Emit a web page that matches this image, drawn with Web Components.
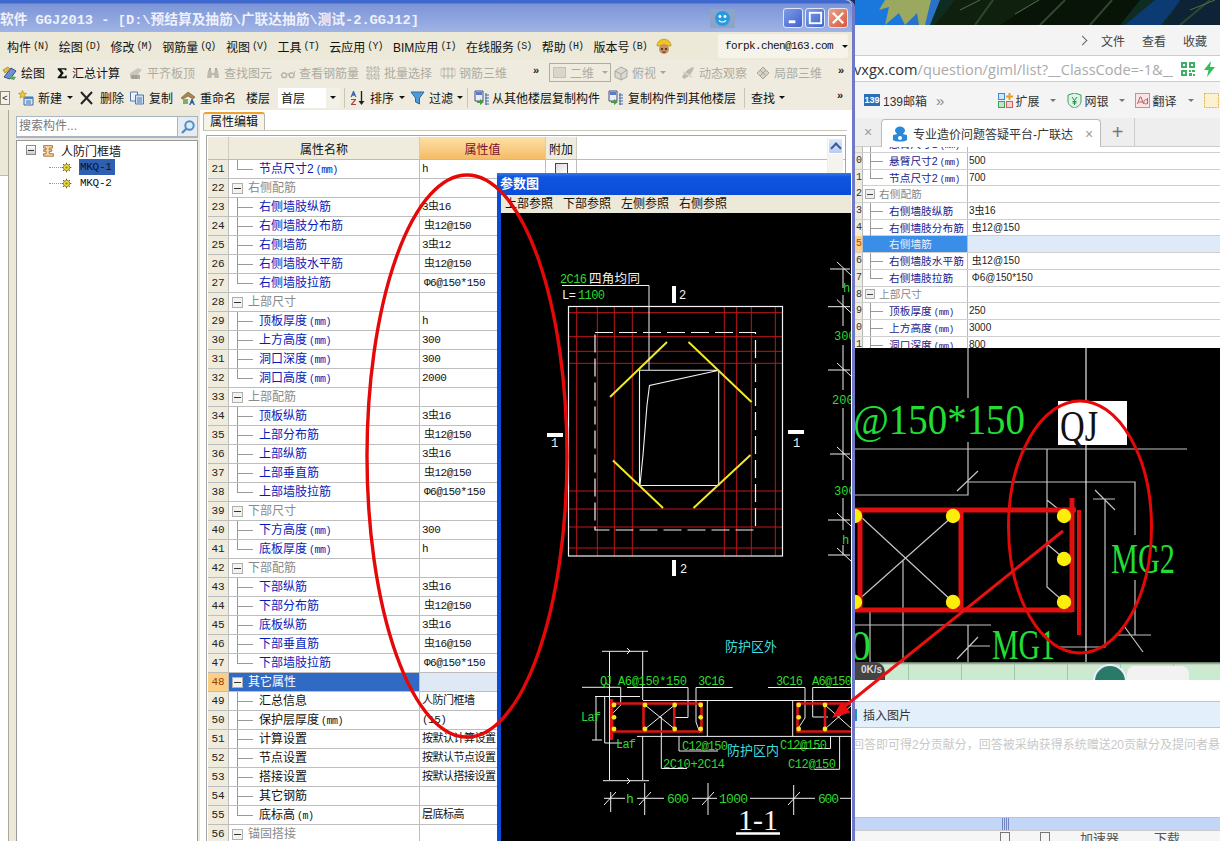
<!DOCTYPE html>
<html lang="zh">
<head>
<meta charset="utf-8">
<title>GGJ2013</title>
<style>
  html, body { margin: 0; padding: 0; background: #000; }
  body { font: 12px "Liberation Sans", "Noto Sans CJK SC", sans-serif; color: #111; }
</style>
</head>
<body>
<gl-desktop>
  <gl-wallpaper></gl-wallpaper>
  <gl-browser></gl-browser>
  <ggj-window></ggj-window>
  <param-dialog></param-dialog>
  <markup-layer></markup-layer>
</gl-desktop>

<script>
const MONO = '"Liberation Mono", "Noto Sans CJK SC", monospace';

const ICONS = {
  draw: '<path d="M2 12 L9 3 L14 6 L8 14 Z" fill="#6f8fd0" stroke="#34508c"/><path d="M1 5l5-3 2 2-5 4z" fill="#e8c040" stroke="#8a6a10" stroke-width=".6"/><path d="M9 11l5 1-2 3-4-1z" fill="#58a858"/>',
  sigma: '<path d="M3 2.5h10v2.4h-1.6l-.4-.9H7l3 4-3 4h4.4l.5-1.1H13.4V14H3v-1.2L6.7 8.2 3 3.6z" fill="#111"/>',
  level: '<path d="M2 13V8l8-5 4 2-3 3v5z" fill="#c9c7bd"/><path d="M3 10h9v4H3z" fill="#aeaca2"/><path d="M5 10v4M8 10v4" stroke="#8f8d84"/>',
  binoc: '<path d="M2 13l1-8h3l1 3h2l1-3h3l1 8H9.6L9 10H7l-.6 3z" fill="#bdbbb0"/><path d="M4 3h2v2H4zM10 3h2v2h-2z" fill="#a5a399"/>',
  glasses: '<path d="M1.5 10c1-3 4-3 5 0s-4 4-5 0zM9 10c1-3 4-3 5 0s-4 4-5 0z" fill="none" stroke="#b4b2a8" stroke-width="1.4"/><path d="M6.5 9l3-.2M14 9l1-3" stroke="#b4b2a8"/>',
  batch: '<path d="M2 2h5v5H2zM9 2h5v5H9zM2 9h5v5H2zM9 9h5v5H9z" fill="#d9d7cc" stroke="#b0aea3" stroke-dasharray="2 1"/>',
  rebar: '<path d="M1 4h14M1 11h14M4 2v12M8 2v12M12 2v12" stroke="#b4b2a8" fill="none"/><path d="M1 4v7M15 4v7" stroke="#c8c6bb"/>',
  cube: '<path d="M2 6l6-4 6 3v7l-6 3-6-3z" fill="#dcdad0" stroke="#aaa89e"/><path d="M2 6l6 3 6-4M8 9v6" stroke="#aaa89e" fill="none"/>',
  orbit: '<path d="M2 12c2-5 7-9 12-10-1 5-5 10-10 12z" fill="#bdbbb1"/><path d="M3 7l9 5" stroke="#d8d6cc" stroke-width="2"/>',
  local: '<path d="M2 8l6-6 6 6-6 6z" fill="#d4d2c7" stroke="#a8a69c"/><path d="M5 5l6 6M11 5l-6 6" stroke="#a8a69c"/>',
  news: '<path d="M6 7h9v8H6z" fill="#dfe8f6" stroke="#3c6aa8"/><path d="M6 7h9v2H6z" fill="#4e82c8"/><path d="M8 11h5M8 13h5" stroke="#3c6aa8"/><path d="M4.5.5l1.2 2.6 2.8.3-2.1 1.9.6 2.8-2.5-1.4-2.5 1.4.6-2.8L.5 3.4l2.8-.3z" fill="#f0c832" stroke="#a5851a" stroke-width=".6"/>',
  del: '<path d="M2 2l11 12M13 2L2 14" stroke="#222" stroke-width="2"/>',
  copy: '<path d="M1.5 2h7v9h-7z" fill="#eef3fb" stroke="#4f78b0"/><path d="M6.5 5h8v9h-8z" fill="#cfe0f6" stroke="#4f78b0"/><path d="M8 8h5M8 10h5M8 12h5" stroke="#4f78b0"/>',
  rename: '<path d="M1 8l7-6 7 5-2 2-5-3-5 3z" fill="#a9884a" stroke="#6a5424" stroke-width=".6"/><path d="M3 9h5v5H3z" fill="#7fae6c"/><path d="M9 15l2.5-6h1L15 15h-1.4l-.5-1.400h-2.200L10.400 15z" fill="#2a5ca8"/>',
  az: '<path d="M.5 7L3 1h1l2.500 6H5.200l-.5-1.300H2.300L1.800 7z" fill="#3a6ab0"/><path d="M1 9h5v1L2.600 14H6v1H1v-1l3.400-4H1z" fill="#b04040"/><path d="M11.5 1v12" stroke="#222" stroke-width="1.4"/><path d="M8.5 11h6l-3 4z" fill="#222"/>',
  filter: '<path d="M1 2h13L9.5 8v6l-4-2V8z" fill="#4f9ad8" stroke="#2a6aa0"/>',
  cfrom: '<path d="M1 1h8v10H1z" fill="#e8eef8" stroke="#4a4a70"/><path d="M2 2h6v3H2z" fill="#5a7ad0"/><path d="M3 11l3 0v-2l4 3-4 3v-2H3z" fill="#40a040"/><path d="M11 5h4M11 8h4M11 11h4M11 14h4M12 3v12" stroke="#3a6ab0"/>',
  search: '<circle cx="9.5" cy="6.5" r="4.2" fill="#dbeaf8" stroke="#4f8fc8" stroke-width="2"/><path d="M6.5 9.5L2 14" stroke="#4f8fc8" stroke-width="2.4"/>',
  wall: '<path d="M2 2h11v3H9v2h3v2H9v3h5v3H2v-3h3V9H2V7h3V5H2z" fill="#f5d9a8" stroke="#a05a14"/>',
  gear: '<circle cx="8" cy="8" r="4.6" fill="#f2dc38" stroke="#6a5a10"/><circle cx="8" cy="8" r="1.6" fill="#8a7614"/><path d="M8 1v2M8 13v2M1 8h2M13 8h2M3 3l1.5 1.5M11.5 11.5L13 13M13 3l-1.5 1.5M4.5 11.5L3 13" stroke="#6a5a10" stroke-width="1.4"/>'
};
const icon = (name, s = 16) => `<svg width="${s}" height="${s}" viewBox="0 0 16 16" style="flex:none;display:block">${ICONS[name] || ''}</svg>`;

class Base extends HTMLElement {
  connectedCallback() {
    if (this.shadowRoot) return;
    this.attachShadow({ mode: 'open' });
    this.shadowRoot.innerHTML = this.render();
  }
}

customElements.define('gl-desktop', class extends Base {
  render() {
    return `<style>:host{display:block;position:relative;width:1220px;height:841px;overflow:hidden;background:#10305a}</style><slot></slot>`;
  }
});

customElements.define('gl-wallpaper', class extends Base {
  render() {
    return `<style>:host{position:absolute;left:855px;top:0;width:365px;height:25px;display:block}svg{display:block}</style>
    <svg width="365" height="25" viewBox="855 0 365 25">
      <rect x="855" y="0" width="365" height="25" fill="#0e2c22"/>
      <rect x="855" y="0" width="50" height="25" fill="#1a78dc"/>
      <path d="M900 0h40l-10 25h-28z" fill="#2a72c8"/>
      <path d="M885 0l-6 10 10-3-4 18 14-12 6 12 12-12 2 12h6l6-25z" fill="#9aa860"/>
      <path d="M935 25L955 0h110l-15 25z" fill="#10200e"/>
      <path d="M1000 25l40-25h100l-20 25z" fill="#081408"/>
      <path d="M1125 25l30-25h26l-20 25z" fill="#0c3a72"/>
      <path d="M1165 25l15-25h40v25z" fill="#0e2436"/>
      <path d="M975 25l18-25M1040 25l25-25M1090 25l22-25M1180 25l30-25" stroke="#2c4a2a" stroke-width="2"/>
      <path d="M960 10l20-10M1015 14l24-14M1190 10l25-10" stroke="#4f6e4c"/>
    </svg>`;
  }
});

/* ---------- GGJ main window ---------- */
customElements.define('title-btn', class extends Base {
  render() {
    const k = this.getAttribute('kind');
    const bg = k === 'close' ? 'linear-gradient(135deg,#eda08c,#d8583c)' : 'linear-gradient(135deg,#7f9be6,#3e62d0)';
    const g = k === 'min' ? '<rect x="5" y="12" width="7" height="3" fill="#fff"/>'
      : k === 'max' ? '<rect x="4" y="4" width="12" height="11" fill="none" stroke="#fff" stroke-width="2"/>'
      : '<path d="M4 4l11 11M15 4L4 15" stroke="#fff" stroke-width="2.4"/>';
    return `<style>:host{display:block;width:20px;height:20px;border-radius:3px;border:1px solid #dfe6f8;box-sizing:border-box;background:${bg}}svg{display:block}</style>
    <svg width="18" height="18" viewBox="0 0 19 19">${g}</svg>`;
  }
});

customElements.define('title-bar', class extends Base {
  render() {
    return `<style>
      :host{display:flex;align-items:center;height:32px;box-sizing:border-box;padding-top:4px;
        background:linear-gradient(#3f69cf 0,#3f69cf 3px,#7b95d8 4px,#a0b3e4 100%);border-radius:0 7px 0 0;overflow:hidden}
      .t{font:bold 13.7px ${MONO};color:#eef1fb;white-space:pre;flex:none;width:710px;letter-spacing:0}
      .face{width:25px;height:19px;background:#8ba4c8;display:flex;justify-content:center;align-items:center;flex:none;margin-right:48px}
      .btns{display:flex;gap:2px}
      .btns title-btn:last-child{margin-left:1px}
    </style>
    <div class="t">软件 GGJ2013 - [D:\\预结算及抽筋\\广联达抽筋\\测试-2.GGJ12]</div>
    <div class="face"><svg width="17" height="17" viewBox="0 0 17 17"><circle cx="8.5" cy="8.5" r="7.5" fill="#2a9ae0"/><circle cx="6" cy="6.5" r="1.4" fill="#fff"/><circle cx="11" cy="6.5" r="1.4" fill="#fff"/><path d="M5 10.5c2 2 5 2 7 0" stroke="#fff" fill="none" stroke-width="1.2"/></svg></div>
    <div class="btns"><title-btn kind="min"></title-btn><title-btn kind="max"></title-btn><title-btn kind="close"></title-btn></div>`;
  }
});

customElements.define('menu-item', class extends Base {
  render() {
    return `<style>:host{display:inline-flex;align-items:center;font-size:12px;color:#111;white-space:nowrap;flex:none}
      small{font:10px ${MONO};letter-spacing:-.9px;margin-left:2px;color:#222}</style>
      <slot></slot><small>(${this.getAttribute('k')})</small>`;
  }
});

customElements.define('menu-bar', class extends Base {
  render() {
    return `<style>
      :host{display:flex;align-items:center;height:28px;background:#ece9d8;padding:0 4px 0 7px;gap:10.4px;box-sizing:border-box}
      .hat{width:18px;height:18px;flex:none;margin-left:-2px;margin-right:auto}
      .acct{flex:none;width:130px;height:24px;background:#f6f4ea;display:flex;align-items:center;padding-left:7px;box-sizing:border-box;
        font:11px ${MONO};letter-spacing:-.6px;color:#111;border-radius:3px}
      .acct i{margin-left:9px;width:0;height:0;border:3.5px solid transparent;border-top-color:#111;border-bottom:0}
    </style>
    <slot></slot>
    <svg class="hat" viewBox="0 0 18 18"><path d="M2 9c0-9 14-9 14 0z" fill="#f2c41e" stroke="#a88010" stroke-width=".6"/><circle cx="9" cy="12" r="5" fill="#c89060"/><circle cx="7" cy="12" r="1" fill="#222"/><circle cx="11" cy="12" r="1" fill="#222"/><path d="M7.5 15h3" stroke="#622"/></svg>
    <div class="acct">forpk.chen@163.com<i></i></div>`;
  }
});

customElements.define('tool-bar', class extends Base {
  render() {
    return `<style>:host{display:flex;align-items:center;height:25px;background:#efecdf;box-sizing:border-box;overflow:hidden;position:relative}</style><slot></slot>`;
  }
});

customElements.define('tool-item', class extends Base {
  render() {
    const w = this.getAttribute('w');
    const ic = this.getAttribute('icon');
    const dis = this.hasAttribute('dis');
    const p = this.getAttribute('p') || 2;
    const gap = this.getAttribute('gap') || 3;
    const s = this.getAttribute('s') || 16;
    return `<style>:host{display:flex;align-items:center;flex:none;width:${w}px;height:100%;box-sizing:border-box;padding-left:${p}px;gap:${gap}px;
        font-size:12px;color:${dis ? '#adab9f' : '#111'};white-space:nowrap;overflow:hidden}
      i{margin-left:1px;width:0;height:0;border:3px solid transparent;border-top-color:${dis ? '#a5a398' : '#111'};border-bottom:0}</style>
      ${ic ? icon(ic, s) : ''}<slot></slot>${this.hasAttribute('caret') ? '<i></i>' : ''}`;
  }
});

customElements.define('tool-sep', class extends Base {
  render() {
    return `<style>:host{display:block;flex:none;width:1px;height:20px;background:#c9c6b6;margin:0 ${this.getAttribute('m') || 4}px}</style>`;
  }
});

customElements.define('tool-more', class extends Base {
  render() {
    return `<style>:host{display:block;flex:none;margin-left:${this.getAttribute('ml') || 0}px;width:${this.getAttribute('w') || 14}px;font:bold 11px "Liberation Sans",sans-serif;line-height:12px;margin-top:-6px;color:#222}</style>»`;
  }
});

customElements.define('tool-combo', class extends Base {
  render() {
    const flat = this.hasAttribute('flat');
    const c = flat ? '#111' : '#adab9f';
    return `<style>:host{display:flex;align-items:center;flex:none;width:${this.getAttribute('w')}px;height:${flat ? 20 : 19}px;box-sizing:border-box;
        background:${flat ? '#fff' : 'transparent'};border:${flat ? 0 : '1px solid #b0ae9f'};margin-left:${this.getAttribute('ml') || 0}px;
        font-size:12px;color:${c};padding-left:3px;gap:4px;position:relative;white-space:nowrap}
      .sw{flex:none;width:13px;height:11px;background:#d8d6cb;border:1px solid #c4c2b6;box-sizing:border-box;display:${flat ? 'none' : 'block'}}
      span{flex:1}
      b{flex:none;width:${flat ? 14 : 10}px;height:100%;display:flex;align-items:center;justify-content:center;background:${flat ? '#f3f1e7' : 'transparent'}}
      i{width:0;height:0;border:3px solid transparent;border-top-color:${c};border-bottom:0}</style>
      <div class="sw"></div><span><slot></slot></span><b><i></i></b>`;
  }
});

customElements.define('tree-row', class extends Base {
  render() {
    const lvl = this.getAttribute('level');
    const sel = this.hasAttribute('sel');
    if (lvl === '0') {
      return `<style>:host{display:flex;align-items:center;height:18px;padding-left:9px;font-size:12px}
        .box{width:8px;height:8px;border:1px solid #8a8a8a;background:linear-gradient(#fff,#ccc);display:flex;align-items:center;justify-content:center;box-sizing:content-box;margin-right:6px}
        .box::after{content:"";width:6px;height:1px;background:#333}
        svg{margin-right:6px}</style>
        <div class="box"></div>${icon('wall', 13)}<slot></slot>`;
    }
    return `<style>:host{display:flex;align-items:center;height:${this.getAttribute('h') || 16}px;padding-left:32px;font:11px ${MONO};letter-spacing:-.3px}
      .dot{width:12px;height:0;border-top:1px dotted #999}
      .lab{margin-left:7px;padding:2px 1px;${sel ? 'background:#2f5fb0;color:#0a1430' : ''};width:36px;box-sizing:border-box}</style>
      <div class="dot"></div>${icon('gear', 11)}<div class="lab"><slot></slot></div>`;
  }
});

customElements.define('side-panel', class extends Base {
  render() {
    return `<style>
      :host{display:flex;flex:none;width:200px;background:#ece9d8;box-sizing:border-box}
      .strip{width:9px;flex:none;display:flex;flex-direction:column;border-right:1px solid #aca899;box-sizing:border-box}
      .strip .a{height:65px;background:#ece9d8;border-bottom:1px solid #bbb}
      .strip .b{flex:1;background:#fff}
      .col{margin-left:7px;width:182px;padding-top:6px;display:flex;flex-direction:column;gap:2px}
      .search{height:22px;display:flex;background:#fff;border:1px solid #a8b4c4;box-sizing:border-box;border-bottom-width:2px}
      .search span{flex:1;padding-left:2px;color:#777;line-height:19px;font-size:12px}
      .search b{flex:none;width:19px;background:#e8ecf2;display:flex;justify-content:center;align-items:center;border-left:1px solid #a8b4c4}
      .tree{flex:1;background:#fff;border:1px solid #9a9a9a;border-bottom:0;box-sizing:border-box}
    </style>
    <div class="strip"><div class="a"></div><div class="b"></div></div>
    <div class="col">
      <div class="search"><span>搜索构件...</span><b>${icon('search')}</b></div>
      <div class="tree">
        <tree-row level="0">人防门框墙</tree-row>
        <tree-row level="1" sel>MKQ-1</tree-row>
        <tree-row level="1">MKQ-2</tree-row>
      </div>
    </div>`;
  }
});

const ROWS = [
  [21, 'l', '节点尺寸2|(mm)', 'h', 'end'], [22, 'g', '右侧配筋'],
  [23, 'l', '右侧墙肢纵筋', '3虫16'], [24, 'l', '右侧墙肢分布筋', ' 虫12@150'], [25, 'l', '右侧墙筋', '3虫12'],
  [26, 'l', '右侧墙肢水平筋', ' 虫12@150'], [27, 'l', '右侧墙肢拉筋', ' Φ6@150*150', 'end'],
  [28, 'g', '上部尺寸'], [29, 'l', '顶板厚度|(mm)', 'h'], [30, 'l', '上方高度|(mm)', '300'], [31, 'l', '洞口深度|(mm)', '300'], [32, 'l', '洞口高度|(mm)', '2000', 'end'],
  [33, 'g', '上部配筋'], [34, 'l', '顶板纵筋', '3虫16'], [35, 'l', '上部分布筋', ' 虫12@150'], [36, 'l', '上部纵筋', '3虫16'], [37, 'l', '上部垂直筋', ' 虫12@150'], [38, 'l', '上部墙肢拉筋', ' Φ6@150*150', 'end'],
  [39, 'g', '下部尺寸'], [40, 'l', '下方高度|(mm)', '300'], [41, 'l', '底板厚度|(mm)', 'h', 'end'],
  [42, 'g', '下部配筋'], [43, 'l', '下部纵筋', '3虫16'], [44, 'l', '下部分布筋', ' 虫12@150'], [45, 'l', '底板纵筋', '3虫16'], [46, 'l', '下部垂直筋', ' 虫16@150'], [47, 'l', '下部墙肢拉筋', ' Φ6@150*150', 'end'],
  [48, 's', '其它属性'],
  [49, 'k', '汇总信息', '人防门框墙'], [50, 'k', '保护层厚度|(mm)', '(15)'], [51, 'k', '计算设置', '按默认计算设置'], [52, 'k', '节点设置', '按默认节点设置'],
  [53, 'k', '搭接设置', '按默认搭接设置'], [54, 'k', '其它钢筋', ''], [55, 'k', '底标高|(m)', '层底标高', 'end'],
  [56, 'g', '锚固搭接']
];

customElements.define('prop-grid', class extends Base {
  render() {
    const nameHtml = s => { const [a, b] = s.split('|'); return a + (b ? `<small>${b}</small>` : ''); };
    const rows = ROWS.map(([n, t, name, val, end]) => {
      const box = t === 'g' || t === 's' ? '<b class="box"></b>' : '';
      const cls = t === 'g' ? 'group' : t === 's' ? 'sel' : t === 'k' ? 'leaf dark' : 'leaf';
      const check = n === 21 ? '<span class="chk"></span>' : '';
      const v = val || '';
      return `<div class="r ${cls} ${end ? 'end' : ''}"><div class="n">${n}</div><div class="nm">${box}<span>${nameHtml(name)}</span></div><div class="v ${v[0] === ' ' ? 'ind' : ''}">${v.trim()}</div><div class="x">${check}</div><div class="f"></div></div>`;
    }).join('');
    return `<style>
      :host{display:block;flex:1;border:1px solid #a5a5a5;border-bottom:0;box-sizing:border-box;background:#fff;padding:1px 0 0 1px;min-height:0;overflow:hidden;position:relative}
      .r,.h{display:grid;grid-template-columns:21px 191px 126px 31px 1fr}
      .h{height:23px;align-items:stretch;border-bottom:1px solid #bbb;box-sizing:border-box}
      .h div{display:flex;align-items:center;justify-content:center;background:#efecdd;border-right:1px solid #d0cdbd;font-size:12px;box-sizing:border-box}
      .h .val{background:linear-gradient(#fde0a8,#f5bc66);color:#7a1030}
      .h .f{background:#fff;border:0}
      .r{height:19px;box-sizing:border-box;border-bottom:1px solid #bdbdbd;font-size:12px}
      .n{background:#efecdd;border-right:1px solid #bdbdbd;text-align:center;font:11px/18px ${MONO};color:#222}
      .nm{border-right:1px solid #bdbdbd;white-space:nowrap;line-height:18px;box-sizing:border-box;overflow:hidden}
      .nm small{font:10px ${MONO};letter-spacing:-.5px;margin-left:2px}
      .v{border-right:1px solid #bdbdbd;white-space:pre;padding-left:2px;font:11px/18px ${MONO};overflow:hidden;letter-spacing:-.5px;color:#111}
      .v.ind{padding-left:4px}
      .x{border-right:1px solid #bdbdbd;display:flex;justify-content:center;align-items:center}
      .leaf .nm{padding-left:30px;color:#0a1ab8;background:linear-gradient(#999,#999) 8px 0/1px 100% no-repeat,linear-gradient(#999,#999) 8px 9px/16px 1px no-repeat}
      .leaf.end .nm{background:linear-gradient(#999,#999) 8px 0/1px 10px no-repeat,linear-gradient(#999,#999) 8px 9px/16px 1px no-repeat}
      .leaf.dark .nm{color:#111}
      .group .nm{color:#8a8a8a;display:flex;align-items:center;padding-left:3px}
      .sel .nm{background:#316ac5;color:#fff;display:flex;align-items:center;padding-left:3px}
      .sel .n{background:#fbcf85;color:#a03a00}
      .sel .v{background:#dfe9f6}
      .box{flex:none;width:11px;height:11px;background:#f4f4ee;border:1px solid #b0b0b0;box-sizing:border-box;margin-right:5px;display:flex;align-items:center;justify-content:center}
      .box::after{content:"";width:7px;height:1px;background:#333}
      .chk{width:13px;height:13px;border:1px solid #1c5180;box-sizing:border-box;background:linear-gradient(135deg,#dcdcd6,#fff)}
      .sb{position:absolute;right:2px;top:2px;width:15px;height:700px;background:#f4f3ee;border-left:1px solid #eee}
      .sb b{display:flex;align-items:center;justify-content:center;width:15px;height:16px;border-radius:2px;background:linear-gradient(#dfe8fa,#b9cbf2);border:1px solid #fff;box-sizing:border-box}
      .sb i{width:6px;height:6px;border-left:2px solid #3a5a98;border-top:2px solid #3a5a98;transform:rotate(45deg);margin-top:3px}
    </style>
    <div class="h"><div></div><div>属性名称</div><div class="val">属性值</div><div>附加</div><div class="f"></div></div>
    ${rows}
    <div class="sb"><b><i></i></b></div>`;
  }
});

customElements.define('main-panel', class extends Base {
  render() {
    return `<style>
      :host{display:flex;flex-direction:column;flex:1;min-width:0;background:#fff;box-sizing:border-box;padding:2px 5px 0 3px}
      .tab{flex:none;height:18px;width:62px;box-sizing:border-box;border:1px solid #b8b6a8;border-top:2px solid #f0a030;border-bottom:0;border-radius:3px 3px 0 0;
        background:#f6f4ea;text-align:center;font-size:12px;line-height:16px}
      .gap{flex:none;height:4px;border-top:1px solid #c8c6b8}
      .wrap{flex:1;display:flex;flex-direction:column;min-height:0;padding:0 1px 0 3px}
    </style>
    <div class="tab">属性编辑</div><div class="gap"></div>
    <div class="wrap"><prop-grid></prop-grid></div>`;
  }
});

customElements.define('ggj-window', class extends Base {
  render() {
    return `<style>
      :host{position:absolute;left:0;top:0;width:855px;height:841px;display:flex;flex-direction:column;box-sizing:border-box;border-right:3px solid #7078c8;background:#ece9d8;border-radius:0 7px 0 0}
      .body{flex:1;display:flex;min-height:0}
      .back{flex:none;width:10px;height:14px;margin:0 6px 0 0;border:1px solid #8a8878;box-sizing:border-box;font:9px/12px "Liberation Sans",sans-serif;background:#f4f2e8;text-align:center}
    </style>
    <title-bar></title-bar>
    <menu-bar>
      <menu-item k="N">构件</menu-item><menu-item k="D">绘图</menu-item><menu-item k="M">修改</menu-item><menu-item k="Q">钢筋量</menu-item>
      <menu-item k="V">视图</menu-item><menu-item k="T">工具</menu-item><menu-item k="Y">云应用</menu-item><menu-item k="I">BIM应用</menu-item>
      <menu-item k="S">在线服务</menu-item><menu-item k="H">帮助</menu-item><menu-item k="B">版本号</menu-item>
    </menu-bar>
    <tool-bar>
      <tool-item w="52" icon="draw">绘图</tool-item>
      <tool-item w="74" icon="sigma" s="14" p="3" gap="3">汇总计算</tool-item>
      <tool-item w="77" icon="level" dis>平齐板顶</tool-item>
      <tool-item w="75" icon="binoc" dis>查找图元</tool-item>
      <tool-item w="85" icon="glasses" dis>查看钢筋量</tool-item>
      <tool-item w="75" icon="batch" dis>批量选择</tool-item>
      <tool-item w="95" icon="rebar" dis>钢筋三维</tool-item>
      <tool-more w="16"></tool-more>
      <tool-combo w="62">二维</tool-combo>
      <tool-item w="67" icon="cube" dis caret>俯视</tool-item>
      <tool-item w="75" icon="orbit" dis>动态观察</tool-item>
      <tool-item w="85" icon="local" dis>局部三维</tool-item>
      <tool-more></tool-more>
    </tool-bar>
    <tool-bar>
      <div class="back">&lt;</div>
      <tool-item w="60" icon="news" gap="4" caret>新建</tool-item>
      <tool-item w="50" icon="del" p="3" gap="5">删除</tool-item>
      <tool-item w="52" icon="copy" p="3" gap="4">复制</tool-item>
      <tool-item w="63" icon="rename" gap="4">重命名</tool-item>
      <tool-item w="37" p="5">楼层</tool-item>
      <tool-combo w="62" flat>首层</tool-combo>
      <tool-sep></tool-sep>
      <tool-item w="58" icon="az" p="1" gap="4" caret>排序</tool-item>
      <tool-item w="56" icon="filter" p="3" gap="3" caret>过滤</tool-item>
      <tool-sep></tool-sep>
      <tool-item w="132" icon="cfrom" gap="2">从其他楼层复制构件</tool-item>
      <tool-item w="136" icon="cfrom" p="4" gap="4">复制构件到其他楼层</tool-item>
      <tool-sep></tool-sep>
      <tool-item w="88" p="2" caret>查找</tool-item>
      <tool-more></tool-more>
    </tool-bar>
    <div class="body"><side-panel></side-panel><main-panel></main-panel></div>`;
  }
});

/* ---------- CAD pieces, drawn in page coordinates ---------- */
const seg = (list, attrs) => list.map(p => `<path d="${p}" ${attrs}/>`).join('');

customElements.define('cad-plan', class extends Base {
  render() {
    const hy = [312.7, 336.7, 351.3, 363.3, 491, 509, 527, 548];
    const vx = [576.7, 597.3, 614.3, 632.3, 724.3, 736.7, 751.3, 775.3];
    const red = hy.map(y => `M568.5 ${y}H782.5`).concat(vx.map(x => `M${x} 306.5V556`)).join('');
    const ticks = [[850, 269], [850, 306.7], [850, 370], [850, 454], [850, 520], [850, 555]];
    const dots = [[614, 705], [614, 717.3], [614, 729], [645, 705], [645, 729], [674.7, 705], [674.7, 729], [700.7, 705], [700.7, 717.3], [700.7, 729], [798.7, 705], [798.7, 717.3], [798.7, 729], [825, 705], [825, 729]];
    const white = [
      'M562 285.5H649V370', 'M828 306.7H850M830 269H850M828 370H850M830 454H850M828 520H850M828 555H850', 'M843 269V288M843 295V326M843 345V390M843 408V480M843 498V530M843 545V555',
      'M582 687.3H620.7V705L613 713', 'M627 687.5H688V717.5H673', 'M696 687.5H732.7', 'M696 687.5V722L700 733', 'M768 687.5H805V718L797 730', 'M812.7 687.5H852M812.7 687.5V717H828',
      'M643 700.5H852M637 736.4H852M707.3 700.5V736.4M792.7 700.5V736.4',
      'M602 651.3H648M609.5 651.3V780M642.7 651.3V700M642.7 736V780M603 780.7H649',
      'M627 648l3 3-3 3M627 778l3 3-3 3', 'M595 696.5H640M596 697V740M592 740H602M604.7 697V743H622',
      'M679 736.4V751H718', 'M790 748.5H830.5V736.4', 'M814 769.3H839.6V736.4', 'M661.3 717V768.5H687', 'M645 705L674.7 729M674.7 705L645 729M825 705L852 729M825 729L852 705',
      'M604 798.3H625M637 798.3H664M692 798.3H717M750 798.3H815M840 798.3H852',
      'M610.7 792V812M644.7 783V815M708 783V815M793.7 785V815', 'M604 805L616 792M639 805L651 792M702 805L714 792M788 805L800 792'
    ];
    const tickDiag = ticks.map(([x, y]) => `M${x - 13} ${y - 7}L${x + 2} ${y + 7}`).join('');
    return `<style>
      :host{display:block;width:351px;height:628px;background:#000;overflow:hidden;flex:none}
      svg{display:block}
      text{font-family:${MONO};font-size:12px;fill:#2fd82f}
      .w{fill:#f4f4f4}
      .c{fill:#3fdcdc;font-size:13px}
    </style>
    <svg width="351" height="628" viewBox="501 213 351 628">
      <path d="${red}" stroke="#c01818" fill="none"/>
      <rect x="568.5" y="306.5" width="214" height="249.5" fill="none" stroke="#f4f4f4" stroke-width="1.2"/>
      <rect x="595" y="332.5" width="160.5" height="197.5" fill="none" stroke="#f4f4f4" stroke-width="1.2" stroke-dasharray="18 6"/>
      <path d="M639.5 485.5V370.3H718.7V485.5ZM718 370.5L649.5 385.5L647 405L643 455L640 485" fill="none" stroke="#f4f4f4" stroke-width="1.1"/>
      ${seg(['M610 397L667 342', 'M688.5 342L751.5 402', 'M613 460.5L663 508', 'M693.5 508L750.5 455'], 'stroke="#f0e82a" stroke-width="2" fill="none"')}
      <path d="${white.join('')}${tickDiag}" stroke="#f0f0f0" fill="none" stroke-width="1"/>
      <rect x="672" y="286" width="4" height="17" fill="#fff"/><rect x="672" y="560" width="4" height="16" fill="#fff"/>
      <rect x="547" y="433" width="16" height="4" fill="#fff"/><rect x="788" y="430" width="16" height="4" fill="#fff"/>
      <text class="w" x="679" y="299">2</text><text class="w" x="680" y="573">2</text>
      <text class="w" x="551" y="447">1</text><text class="w" x="793" y="447">1</text>
      <text x="560" y="283" textLength="27">2C16</text>
      <text class="w" x="589" y="283" style="font-size:12.5px;letter-spacing:.3px">四角均同</text>
      <text class="w" x="562" y="299" textLength="14">L=</text><text x="578" y="299" textLength="27">1100</text>
      <text x="843" y="292">h</text><text x="834" y="340">300</text><text x="832" y="404">200</text><text x="834" y="495">300</text><text x="842" y="544">h</text>
      <text class="c" x="725" y="651">防护区外</text>
      <text x="600" y="685" textLength="12">QJ</text><text x="618" y="685" textLength="69">A6@150*150</text><text x="698" y="685" textLength="27">3C16</text>
      <text x="776" y="685" textLength="27">3C16</text><text x="812" y="685" textLength="40">A6@150</text>

      <g fill="none">
        <path d="M612 703.5H701.5V731.5H612ZM643.5 703.5V731.5M674.3 703.5V731.5M852 703.5H797.5V731.5H852M825 703.5V731.5" stroke="#d81414" stroke-width="2.6"/>
        <path d="M611.5 699V740" stroke="#e01010" stroke-width="3.2"/>
      </g>
      ${dots.map(([x, y]) => `<circle cx="${x}" cy="${y}" r="2.4" fill="#f8e81c"/>`).join('')}
      <text x="581" y="721" textLength="20">Laf</text><text x="616" y="748" textLength="20">Laf</text>
      <text x="682" y="750" textLength="46">C12@150</text><text x="780" y="749" textLength="47">C12@150</text>
      <text x="788" y="768" textLength="48">C12@150</text><text x="663" y="768" textLength="62">2C10+2C14</text>
      <text class="c" x="727" y="755">防护区内</text>
      <text x="626" y="803" style="font-size:13px">h</text><text x="667" y="803" textLength="22" style="font-size:13px">600</text>
      <text x="719" y="803" textLength="29" style="font-size:13px">1000</text><text x="818" y="803" textLength="21" style="font-size:13px">600</text>
      <text class="w" x="738" y="830" style="font:30px 'Liberation Serif',serif;fill:#f4f4f4" textLength="40" lengthAdjust="spacingAndGlyphs">1-1</text>
      <path d="M736 833.5H780" stroke="#fff" stroke-width="2.4"/>
    </svg>`;
  }
});

customElements.define('cad-zoom', class extends Base {
  render() {
    const g = [
      'M968 348V398M968 442V495H855', 'M855 449H1187', 'M1047 449V587L1063 601', 'M1047 500L1062 512M1047 544L1060 555',
      'M968 482H1135V535M1135 580V635', 'M1118 635H1151M1124 626L1143 652', 'M957 491L978 471', 'M1093 499H1115M1095 490L1115 510M1105 499V647H1060',
      'M855 625H991M968 625V662M957 659L978 637M968 646H990M903 560V662M870 610V662', 'M856 602L953 516M860 516L953 602'
    ];
    return `<style>
      :host{display:block;height:314px;flex:none;background:#000;overflow:hidden}
      svg{display:block}
      text{font-family:"Liberation Serif",serif;fill:#22dd33}
    </style>
    <svg width="365" height="314" viewBox="855 348 365 314">
      <path d="${g.join('')}" stroke="#c4c4c4" stroke-width="1.2" fill="none"/>
      <path d="M1086 348V662" stroke="#e8e8e8" stroke-width="1.2"/>
      <text x="853" y="434" font-size="42" textLength="172" lengthAdjust="spacingAndGlyphs">@150*150</text>
      <rect x="1058" y="401" width="69" height="44" fill="#fff"/>
      <text x="1060" y="441" font-size="44" style="fill:#111" textLength="38" lengthAdjust="spacingAndGlyphs">QJ</text>
      <g stroke="#e01010" fill="none">
        <path d="M855 510H1076M855 610H1072M860 510V610M961 510V610M1072 498V612" stroke-width="5"/>
        <path d="M1079 510V635" stroke-width="4"/>
      </g>
      ${[[1064, 516], [1064, 559], [1064, 602], [953, 516], [953, 602], [855, 516], [855, 602]].map(([x, y]) => `<circle cx="${x}" cy="${y}" r="7.2" fill="#fcee0a"/>`).join('')}
      <text x="1111" y="573" font-size="42" textLength="64" lengthAdjust="spacingAndGlyphs">MG2</text>
      <text x="992" y="659" font-size="42" textLength="63" lengthAdjust="spacingAndGlyphs">MG1</text>
      <text x="850" y="660" font-size="42">0</text>
    </svg>`;
  }
});

customElements.define('param-dialog', class extends Base {
  render() {
    return `<style>
      :host{position:absolute;left:497px;top:173px;width:354px;height:668px;display:flex;flex-direction:column;box-sizing:border-box;background:#0c4cd4;overflow:hidden}
      .t{flex:none;height:22px;background:linear-gradient(#3a78e8 0,#0f55e0 4px,#0a4cd8 100%);color:#fff;font-weight:bold;font-size:13px;line-height:22px;padding-left:3px}
      .m{flex:none;height:18px;background:#ece9d8;display:flex;gap:10px;font-size:12px;line-height:18px;margin-left:4px;box-sizing:border-box;padding-left:4px}
      .c{margin-left:4px;flex:1;min-height:0}
    </style>
    <div class="t">参数图</div>
    <div class="m"><span>上部参照</span><span>下部参照</span><span>左侧参照</span><span>右侧参照</span></div>
    <div class="c"><cad-plan></cad-plan></div>`;
  }
});

/* ---------- browser on the right ---------- */
customElements.define('sheet-rows', class extends Base {
  render() {
    const data = [
      ['9', 'l', '悬臂尺寸1|(mm)', ''], ['0', 'l', '悬臂尺寸2|(mm)', '500'], ['1', 'e', '节点尺寸2|(mm)', '700'], ['2', 'g', '右侧配筋', ''],
      ['3', 'l', '右侧墙肢纵筋', '3虫16'], ['4', 'l', '右侧墙肢分布筋', ' 虫12@150'], ['5', 's', '右侧墙筋', ''], ['6', 'l', '右侧墙肢水平筋', ' 虫12@150'],
      ['7', 'e', '右侧墙肢拉筋', ' Φ6@150*150'], ['8', 'g', '上部尺寸', ''], ['9', 'l', '顶板厚度|(mm)', '250'], ['0', 'l', '上方高度|(mm)', '3000'], ['1', 'l', '洞口深度|(mm)', '800']
    ];
    const rows = data.map(([n, t, name, v]) => {
      const [a, b] = name.split('|');
      return `<div class="r ${t}"><div class="n">${n}</div><div class="nm">${t === 'g' ? '<b class="box"></b>' : ''}<span>${a}${b ? `<small>${b}</small>` : ''}</span></div><div class="v">${v}</div></div>`;
    }).join('');
    return `<style>
      :host{display:block;height:201px;flex:none;overflow:hidden;background:#fff}
      .in{margin-top:-10.7px}
      .r{display:grid;grid-template-columns:8px 105px 1fr;height:16.7px;box-sizing:border-box;border-bottom:1px solid #cfcfcf;font-size:10.7px}
      .n{background:#efecdd;text-align:right;font:10px/16px ${MONO};overflow:hidden;border-right:1px solid #bbb}
      .nm{border-right:1px solid #bbb;padding-left:26px;color:#22228c;white-space:nowrap;line-height:16px;overflow:hidden;
        background:linear-gradient(#999,#999) 7px 0/1px 100% no-repeat,linear-gradient(#999,#999) 7px 8px/13px 1px no-repeat}
      .e .nm{background:linear-gradient(#999,#999) 7px 0/1px 8px no-repeat,linear-gradient(#999,#999) 7px 8px/13px 1px no-repeat}
      .g .nm{color:#888;padding-left:2px;background:none;display:flex;align-items:center}
      .s .n{color:#c04000;background:#fbcf85}
      .s .nm{background:#3a8ee8;color:#e8f2ff}
      .s .v{background:#dfeaf8}
      .nm small{font:9px ${MONO};letter-spacing:-.4px;margin-left:2px}
      .v{white-space:pre;padding-left:1px;font:10px/16px "Liberation Sans","Noto Sans CJK SC",sans-serif;color:#222}
      .box{flex:none;width:10px;height:10px;background:#eee;border:1px solid #aaa;box-sizing:border-box;margin-right:4px;display:flex;align-items:center;justify-content:center}
      .box::after{content:"";width:6px;height:1px;background:#444}
    </style><div class="in">${rows}</div>`;
  }
});

customElements.define('gl-browser', class extends Base {
  render() {
    const qr = '<svg width="14" height="14" viewBox="0 0 14 14" style="flex:none"><path d="M0 0h6v6H0zM8 0h6v6H8zM0 8h6v6H0zM8 8h2v2H8zM11 8h3v2h-3zM8 11h3v3H8zM12 12h2v2h-2z" fill="#3fae68"/><path d="M2 2h2v2H2zM10 2h2v2h-2zM2 10h2v2H2z" fill="#fff"/></svg>';
    const bolt = '<svg width="13" height="16" viewBox="0 0 13 16" style="flex:none"><path d="M8 0L1 9h4.5L4 16l8-10H7z" fill="#2fc05a"/></svg>';
    const tri = '<i class="tri"></i>';
    const ticks = Array.from({ length: 8 }, (_, i) => `<b style="left:${(i + 1) * 53}px"></b>`).join('');
    return `<style>
      :host{position:absolute;left:855px;top:25px;width:365px;height:816px;display:flex;flex-direction:column;background:#fff;overflow:hidden;color:#333}
      .mb{flex:none;height:30px;background:#f4f4f4;display:flex;align-items:center;justify-content:flex-end;padding-right:13px;gap:17px;font-size:12px;color:#444;box-sizing:border-box;padding-top:1px}
      .mb .chev{width:6px;height:6px;border-right:1px solid #666;border-top:1px solid #666;transform:rotate(45deg);margin-right:-2px}
      .ad{flex:none;height:27px;background:#fff;border-top:1px solid #ccc;border-bottom:1px solid #ccc;box-sizing:border-box;display:flex;align-items:center;gap:8px;padding-right:4px}
      .url{flex:1;overflow:hidden;white-space:nowrap;font:14.6px "Open Sans",sans-serif;color:#aaa;margin-left:-1px}
      .url b{font-weight:400;color:#333}
      .bk{flex:none;height:36px;background:#f4f4f4;display:flex;align-items:center;font-size:12px;color:#333;padding-left:9px;overflow:hidden;white-space:nowrap}
      .mail{flex:none;width:16px;height:12px;background:#2a70b8;color:#fff;font:bold 9px/12px "Liberation Sans";text-align:center;margin-right:3px}
      .tri{display:block;flex:none;width:0;height:0;border:3.5px solid transparent;border-top-color:#777;border-bottom:0}
      .ico{flex:none;width:15px;height:15px;margin-right:2px}
      .tabs{flex:none;height:29px;background:#eee;display:flex;align-items:flex-end;border-bottom:1px solid #ccc;box-sizing:border-box;color:#666}
      .tabx{flex:none;width:26px;text-align:center;font-size:14px;line-height:28px;color:#999}
      .tab{flex:none;width:220px;height:28px;background:#fff;border:1px solid #bbb;border-bottom:0;border-radius:4px 4px 0 0;box-sizing:border-box;display:flex;align-items:center;padding-left:10px;gap:5px;font-size:12px;color:#333;margin-bottom:-1px}
      .tab span{flex:none;width:165px;overflow:hidden;white-space:nowrap}
      .tab em{font-style:normal;color:#999;font-size:14px;margin-left:2px}
      .plus{width:33px;text-align:center;font-size:20px;line-height:28px;color:#777;border-right:1px solid #ccc;flex:none}
      .strip{flex:none;height:18px;background:linear-gradient(#5a6a58 0,#cfe8cf 3px,#c8ecd0 100%);display:flex;overflow:hidden;position:relative}
      .strip b{position:absolute;top:2px;bottom:0;width:1px;background:#9dc8a8}
      .rate{flex:none;width:30px;height:18px;background:#444;color:#ddd;font:bold 10px/16px "Liberation Sans";border-radius:0 10px 0 0;padding-left:6px;box-sizing:border-box;position:relative}
      .ball{width:34px;height:34px;border-radius:50%;background:#2a7a68;border:2px solid #eef;margin:2px 0 0 208px;flex:none;box-sizing:border-box;position:relative}
      .pill{width:62px;height:16px;margin:4px 0 0 0;background:#f2f2f2;border-radius:8px 8px 0 0;flex:none;position:relative}
      .wh{flex:none;height:21px;background:#fff}
      .ins{flex:none;height:27px;background:#e3effb;border-top:1px solid #b7c8dc;border-bottom:1px solid #b7c8dc;box-sizing:border-box;font-size:12px;line-height:25px;padding:2px 0 0 8px;color:#333;position:relative}
      .ins::before{content:"";position:absolute;left:0;top:7px;width:2px;height:12px;background:#2a8ac8}
      .ed{flex:1;background:#fff;color:#c8c8c8;font-size:12px;white-space:nowrap;overflow:hidden;padding-top:9px;line-height:17px;margin-left:-3px}
      .hs{flex:none;height:13px;background:#c3d6f8;border-top:1px solid #b0c4ec;box-sizing:border-box;display:flex;justify-content:center}
      .hs span{width:7px;height:100%;margin-left:-65px;background:repeating-linear-gradient(90deg,#6f86c0 0 1px,transparent 1px 2px)}
      .st{flex:none;height:11px;background:#f6f6f6;border-top:1px solid #ccc;box-sizing:border-box;overflow:hidden;display:flex;padding-left:145px;font-size:13px;line-height:16px;color:#555;white-space:nowrap}
      .st i{flex:none;width:10px;height:10px;border:1px solid #777;box-sizing:border-box;margin:1px 30px 0 0}
      .st span{margin-right:35px}
    </style>
    <div class="mb"><i class="chev"></i><span>文件</span><span>查看</span><span>收藏</span></div>
    <div class="ad"><div class="url"><b>vxgx.com</b>/question/giml/list?__ClassCode=-1&amp;__I:</div>${qr}${bolt}</div>
    <div class="bk">
      <div class="mail">139</div><span>139邮箱</span>
      <span style="margin:0 40px 0 9px;color:#888;font-size:15px">»</span>
      <span style="width:2px;height:14px;margin-right:14px;background:repeating-linear-gradient(#bbb 0 2px,transparent 2px 4px)"></span>
      <svg class="ico" viewBox="0 0 15 15"><rect x=".5" y=".5" width="6" height="6" fill="#cfe6fa" stroke="#3a8ad0"/><rect x=".5" y="8.5" width="6" height="6" fill="#bfe8c8" stroke="#3aa060"/><rect x="8.5" y="8.5" width="6" height="6" fill="#fbd0d0" stroke="#d06060"/><path d="M11.5 0v7M8 3.5h7" stroke="#e8a020" stroke-width="2"/></svg>
      <span>扩展</span><span style="margin:0 11px 0 11px">${tri}</span>
      <svg class="ico" viewBox="0 0 15 15"><path d="M7.5 0l6.5 2v6c0 4-3.5 6-6.5 7C4.500 14 1 12 1 8V2z" fill="#dff4e4" stroke="#3aa060"/><path d="M5 4l2.500 3.500L10 4M7.500 7.500V12M5.500 8.500h4M5.500 10h4" stroke="#2a8a50" fill="none"/></svg>
      <span>网银</span><span style="margin:0 10px 0 11px">${tri}</span>
      <svg class="ico" viewBox="0 0 15 15"><rect x=".5" y=".5" width="14" height="14" fill="#fde4e4" stroke="#d88"/><path d="M2.500 11L5 4h1l2.500 7M3.500 9h4M12.500 5v6M12.500 8.500a1.800 2.200 0 1 0 0 .6" stroke="#a66" fill="none"/></svg>
      <span>翻译</span><span style="margin:0 10px 0 12px">${tri}</span>
      <svg class="ico" viewBox="0 0 15 15"><rect x=".5" y=".5" width="14" height="14" fill="#fdf2d0" stroke="#e8b040" stroke-dasharray="2 1"/></svg>
    </div>
    <div class="tabs">
      <div class="tabx">×</div>
      <div class="tab">
        <svg width="16" height="16" viewBox="0 0 16 16" style="flex:none"><ellipse cx="8" cy="4.500" rx="5" ry="4" fill="#2a88d8"/><path d="M1 9c3-1.500 11-1.500 14 0v5c-3 2-11 2-14 0z" fill="#2a88d8"/><circle cx="8" cy="12" r="2" fill="#fff"/></svg>
        <span>专业造价问题答疑平台-广联达</span><em>×</em>
      </div>
      <div class="plus">+</div>
    </div>
    <sheet-rows></sheet-rows>
    <cad-zoom></cad-zoom>
    <div class="strip">${ticks}<div class="rate">0K/s</div><div class="ball"></div><div class="pill"></div></div>
    <div class="wh"></div>
    <div class="ins">插入图片</div>
    <div class="ed">回答即可得2分贡献分，回答被采纳获得系统赠送20贡献分及提问者悬赏分</div>
    <div class="hs"><span></span></div>
    <div class="st"><i></i><i></i><span>加速器</span><span>下载</span></div>`;
  }
});

customElements.define('markup-layer', class extends Base {
  render() {
    return `<style>:host{position:absolute;inset:0;display:block;pointer-events:none}svg{display:block}</style>
    <svg width="1220" height="841" viewBox="0 0 1220 841">
      <ellipse cx="467" cy="456" rx="100" ry="281" fill="none" stroke="#e40808" stroke-width="3.4"/>
      <ellipse cx="1080" cy="527" rx="71.5" ry="126" fill="none" stroke="#e40808" stroke-width="3"/>
      <path d="M1063 531L844 707" stroke="#e81010" stroke-width="3"/>
      <path d="M832 718L850.400 712.500L841.600 701.500Z" fill="#e81010"/>
    </svg>`;
  }
});
</script>
</body>
</html>
